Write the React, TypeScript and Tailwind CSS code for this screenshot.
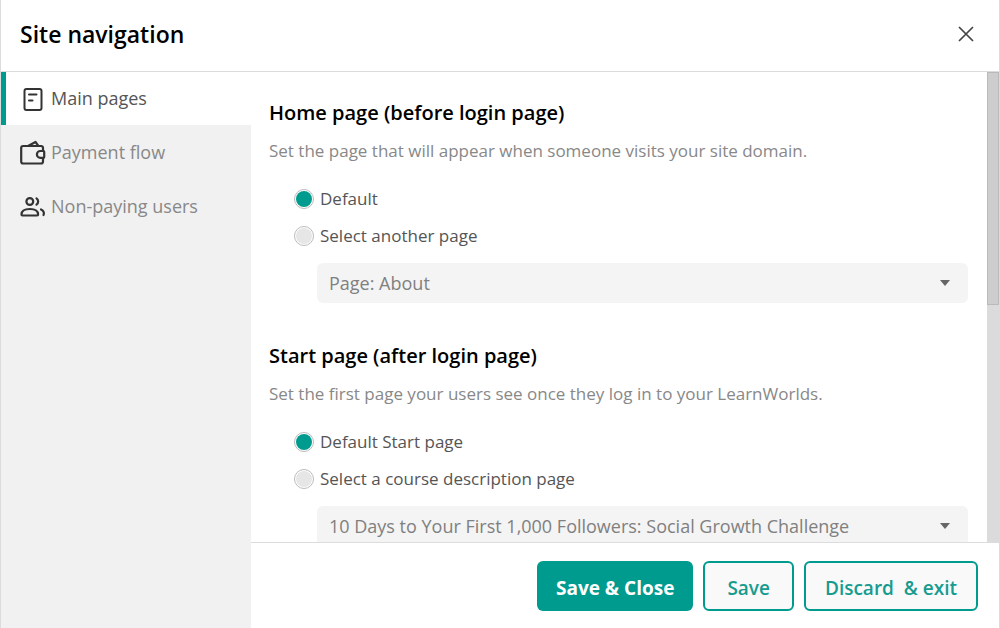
import React, { useState } from 'react';

type Tab = 'main' | 'payment' | 'nonPaying';

interface PageOption {
  id: string;
  label: string;
}

interface PageSectionProps {
  name: string;
  title: string;
  description: string;
  options: PageOption[];
  pages: string[];
}

const PagesIcon = () => (
  <svg className="h-[26px] w-[26px] shrink-0" viewBox="0 0 26 26" fill="none" stroke="#333" strokeWidth="2" strokeLinecap="round" strokeLinejoin="round">
    <rect x="4.500" y="3" width="17" height="21" rx="2" />
    <path d="M9 8.500h7.500M9 14.500h3.500" />
  </svg>
);

const WalletIcon = () => (
  <svg className="h-[26px] w-[26px] shrink-0" viewBox="0 0 26 26" fill="none" stroke="#333" strokeWidth="2.2" strokeLinecap="round" strokeLinejoin="round">
    <path d="M23 11V8a2 2 0 0 0-2-2H3.200a2 2 0 0 0-2 2v13.500a2 2 0 0 0 2 2H21a2 2 0 0 0 2-2V18" />
    <path d="M23.300 11h-3a3.400 3.400 0 0 0 0 6.800h3c.5 0 .9-.3.9-.8v-5.200c0-.5-.4-.8-.9-.8z" />
    <path d="M8.500 5.700 15.500 2l2.700 3.700" />
  </svg>
);

const UsersIcon = () => (
  <svg className="h-[26px] w-[26px] shrink-0" viewBox="0 0 26 26" fill="none" stroke="#333" strokeWidth="2.2" strokeLinecap="round" strokeLinejoin="round">
    <circle cx="9.800" cy="7.500" r="3.400" />
    <path d="M1.500 20.500c0-4 3.200-5.500 8.300-5.500s8.300 1.500 8.300 5.500c0 .6-.4 1-1 1H2.500c-.6 0-1-.4-1-1z" />
    <path d="M16.500 4.300c2.200 1.500 2.200 4.900 0 6.400M21 15.500c2.700 1.300 3.500 3.500 2.500 5.500" />
  </svg>
);

const tabs: { id: Tab; label: string; Icon: React.FC }[] = [
  { id: 'main', label: 'Main pages', Icon: PagesIcon },
  { id: 'payment', label: 'Payment flow', Icon: WalletIcon },
  { id: 'nonPaying', label: 'Non-paying users', Icon: UsersIcon }
];

const PageSection = ({ name, title, description, options, pages }: PageSectionProps) => {
  const [selected, setSelected] = useState(options[0].id);

  return (
    <section className="mb-[39px]">
      <h2 className="text-xl leading-7 font-semibold text-black">{title}</h2>
      <p className="mt-3 text-[17px] leading-6 text-[#888]">{description}</p>
      <div className="mt-[17px] pl-[25px]">
        {options.map((option) => (
          <label key={option.id} className="flex h-[37px] items-center gap-1.5 text-[17px] text-[#555]">
            <input
              type="radio"
              name={name}
              checked={selected === option.id}
              onChange={() => setSelected(option.id)}
              className="h-5 w-5 shrink-0 appearance-none rounded-full border border-[#bbb] bg-[#e6e6e6] bg-clip-content p-px checked:bg-[#009b8f]"
            />
            <span>{option.label}</span>
          </label>
        ))}
      </div>
      <div className="mt-[9px] ml-12 grid items-center">
        <select
          aria-label={title}
          className="col-start-1 row-start-1 h-10 w-full appearance-none rounded-md bg-[#f4f4f4] pr-10 pl-3 text-[18px] text-[#808080]"
        >
          {pages.map((page) => (
            <option key={page}>{page}</option>
          ))}
        </select>
        <svg className="pointer-events-none col-start-1 row-start-1 mr-[18px] h-1.5 w-2.5 justify-self-end" viewBox="0 0 10 6">
          <path d="M0 0h10L5 6z" fill="#666" />
        </svg>
      </div>
    </section>
  );
};

export default function App() {
  const [activeTab, setActiveTab] = useState<Tab>('main');

  return (
    <div className="flex h-screen flex-col border-x border-[#dcdcdc] bg-white font-['Open_Sans','Noto_Sans',sans-serif]">
      {/* Header */}
      <header className="flex h-[72px] shrink-0 items-center justify-between border-b border-[#dcdcdc] pr-[25px] pb-1 pl-[19px]">
        <h1 className="text-[23px] leading-8 font-semibold text-black">Site navigation</h1>
        <button type="button" aria-label="Close">
          <svg className="h-4 w-4" viewBox="0 0 16 16" fill="none" stroke="#444" strokeWidth="1.7">
            <path d="M1 1l14 14M15 1 1 15" />
          </svg>
        </button>
      </header>

      <div className="flex min-h-0 flex-1">
        {/* Sidebar */}
        <nav className="flex w-[250px] shrink-0 flex-col gap-px bg-[#f1f1f1]">
          {tabs.map(({ id, label, Icon }) => (
            <button
              key={id}
              type="button"
              onClick={() => setActiveTab(id)}
              className={`flex h-[53px] w-full items-center gap-[5px] border-l-[5px] pl-3.5 text-[18px] ${
                activeTab === id
                  ? 'border-[#009b8f] bg-white text-[#555]'
                  : 'border-transparent text-[#888]'
              }`}
            >
              <Icon />
              <span>{label}</span>
            </button>
          ))}
        </nav>

        <div className="flex min-w-0 flex-1 flex-col">
          <div className="flex min-h-0 flex-1">
            <main className="min-w-0 flex-1 overflow-y-auto pt-[27px] pr-[19px] pl-[18px] [scrollbar-width:none]">
              <PageSection
                name="home-page"
                title="Home page (before login page)"
                description="Set the page that will appear when someone visits your site domain."
                options={[
                  { id: 'default', label: 'Default' },
                  { id: 'other', label: 'Select another page' }
                ]}
                pages={['Page: About']}
              />
              <PageSection
                name="start-page"
                title="Start page (after login page)"
                description="Set the first page your users see once they log in to your LearnWorlds."
                options={[
                  { id: 'default', label: 'Default Start page' },
                  { id: 'course', label: 'Select a course description page' }
                ]}
                pages={['10 Days to Your First 1,000 Followers: Social Growth Challenge']}
              />
            </main>
            <div className="w-3 shrink-0 bg-[#dbdbdb]">
              <div className="h-[233px] border border-[#bababa] bg-[#cdcdcd]" />
            </div>
          </div>

          {/* Actions */}
          <footer className="flex shrink-0 justify-end gap-2.5 border-t border-[#dcdcdc] pt-[18px] pr-[21px] pb-[17px] text-[19px] font-semibold">
            <button type="button" className="h-[50px] rounded-md bg-[#009b8f] px-[19px] pt-1 font-bold text-white">
              Save &amp; Close
            </button>
            <button type="button" className="h-[50px] rounded-md border-2 border-[#009b8f] bg-[#f9f9f9] px-[22px] pt-1 text-[#179b8f]">
              Save
            </button>
            <button type="button" className="h-[50px] rounded-md border-2 border-[#009b8f] bg-[#f9f9f9] px-[19px] pt-1 whitespace-pre text-[#179b8f]">
              {'Discard  & exit'}
            </button>
          </footer>
        </div>
      </div>
    </div>
  );
}
